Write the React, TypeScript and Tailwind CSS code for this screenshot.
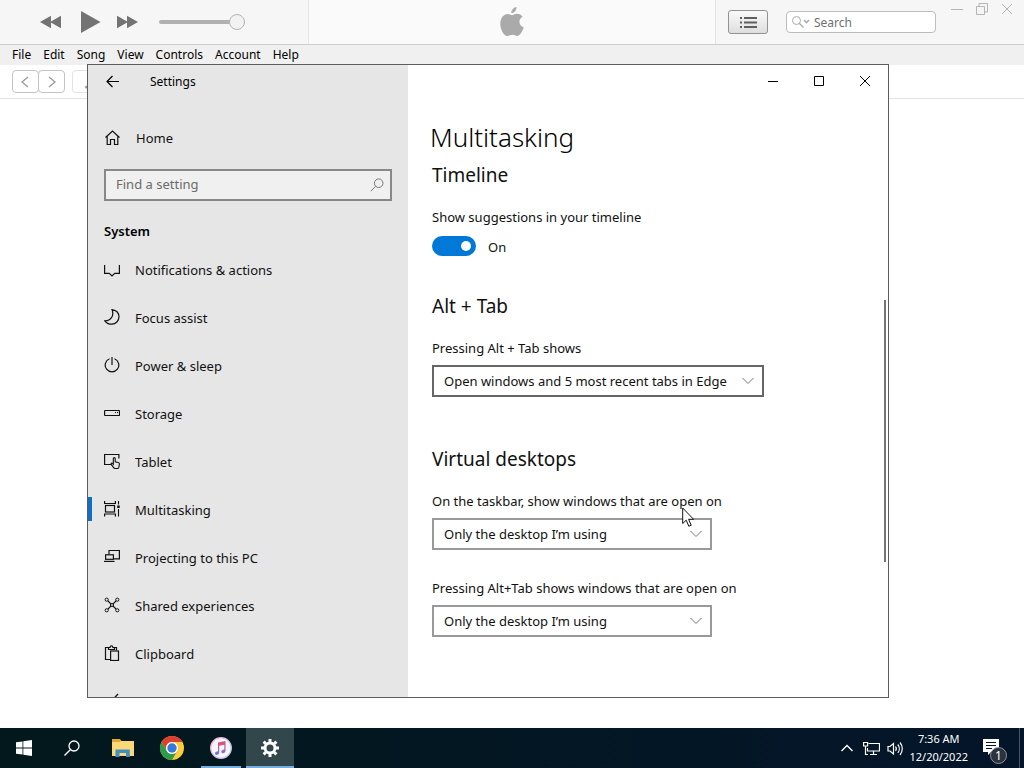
import type { ReactNode } from "react";

function Svg({ size = 16, className = "", children }: { size?: number; className?: string; children: ReactNode }) {
  return (
    <svg
      width={size}
      height={size}
      viewBox={`0 0 ${size} ${size}`}
      fill="none"
      stroke="currentColor"
      strokeWidth="1"
      className={`shrink-0 ${className}`}
      aria-hidden="true"
    >
      {children}
    </svg>
  );
}

const navItems: { label: string; icon: ReactNode; active?: boolean }[] = [
  { label: "Notifications & actions", icon: <path strokeWidth="1.2" d="M.6 4v8.4h4.6L8 15l2.8-2.6h4.6V4" /> },
  {
    label: "Focus assist",
    icon: <path strokeWidth="1.2" d="M8 .6c4.500.8 7 3.800 7 7.200 0 4-3.200 7.400-7.200 7.400-3 0-5.600-1.400-7-3.400C6.500 12 10.500 7 8 .6Z" />,
  },
  {
    label: "Power & sleep",
    icon: (
      <>
        <path strokeWidth="1.2" d="M5.500 1.800a6.800 6.800 0 1 0 5 0" />
        <path strokeWidth="1.2" d="M8 0v8" />
      </>
    ),
  },
  {
    label: "Storage",
    icon: (
      <>
        <rect x=".6" y="5.500" width="14.900" height="5" rx=".5" strokeWidth="1.200" />
        <path d="M11 7.500h1M13 7.500h1" />
      </>
    ),
  },
  {
    label: "Tablet",
    icon: (
      <>
        <path strokeWidth="1.200" d="M7 11.500H.6V1.500h14.300v4" />
        <path
          strokeWidth="1.100"
          d="M9.300 10V5.600c0-1.300 1.900-1.300 1.900 0v3.300l3 .6c.9.200 1.300.7 1.200 1.500l-.5 3.200c-.2.900-.7 1.300-1.500 1.300h-2.200c-.7 0-1.200-.3-1.600-.9L7.200 11.400c-.5-1 .6-1.700 1.300-.9l.8.9V9"
        />
      </>
    ),
  },
  {
    label: "Multitasking",
    active: true,
    icon: (
      <>
        <path strokeWidth="1.200" d="M.6 0v2.500h10.800V0M.6 15.500V13h10.800v2.500" />
        <rect x="1.500" y="4.500" width="9" height="6.500" strokeWidth="1.200" />
        <path d="M14.500 0v3.500M14.500 8v7.500" strokeWidth="1.100" />
        <rect x="13.200" y="4.500" width="2.500" height="2.500" fill="currentColor" stroke="none" />
      </>
    ),
  },
  {
    label: "Projecting to this PC",
    icon: (
      <>
        <path strokeWidth="1.200" d="M5 5.500v-4h10.400v8.400H10" />
        <rect x="1.600" y="5.800" width="7.800" height="4.500" strokeWidth="1.200" />
        <path strokeWidth="1.200" d="M0 12.400h10.500" />
      </>
    ),
  },
  {
    label: "Shared experiences",
    icon: (
      <>
        <circle cx="2.700" cy="2.700" r="1.600" />
        <circle cx="13.300" cy="2.700" r="1.600" />
        <circle cx="2.700" cy="13.300" r="1.600" />
        <circle cx="13.300" cy="13.300" r="1.600" />
        <circle cx="8" cy="8" r="1.500" strokeWidth="1.200" />
        <path strokeWidth="1.200" d="m4 4 2.900 2.900M12 4 9.100 6.900M4 12l2.900-2.900M12 12 9.100 9.100" />
      </>
    ),
  },
  {
    label: "Clipboard",
    icon: (
      <>
        <path strokeWidth="1.200" d="M6 14.500H1.500v-12h3M10 2.500h2.500v3" />
        <path strokeWidth="1.200" d="M4.500 4.500v-2h1.600C6 .2 8.900.2 8.900 2.500h1.600v2Z" />
        <rect x="6.600" y="6" width="7.900" height="9.500" strokeWidth="1.200" />
      </>
    ),
  },
];

function Chevron() {
  return (
    <svg
      width="12"
      height="8"
      viewBox="0 0 12 8"
      fill="none"
      stroke="#777"
      className="pointer-events-none absolute top-3 right-[10px]"
      aria-hidden="true"
    >
      <path d="m.5 1 5.500 5.500L11.500 1" />
    </svg>
  );
}

function Field({ id, label, value, wide }: { id: string; label: string; value: string; wide?: boolean }) {
  return (
    <div>
      <label htmlFor={id} className="block leading-5">
        {label}
      </label>
      <div className={`relative mt-[7px] max-w-full ${wide ? "w-[332px]" : "w-[280px]"}`}>
        <select
          id={id}
          className={`block h-8 w-full appearance-none border-2 bg-white pt-0.5 pl-[10px] outline-none ${wide ? "border-[#666]" : "border-[#999]"}`}
        >
          <option>{value}</option>
        </select>
        <Chevron />
      </div>
    </div>
  );
}

function PlayerWindow() {
  return (
    <main className="flex flex-1 flex-col bg-white">
      <header className="flex h-[45px] shrink-0 border-b border-[#cdcdcd] bg-[#f6f6f6] text-[#737373]">
        <div className="flex w-[309px] shrink-0 items-center border-r border-[#e6e6e6] pl-10">
          <button aria-label="Previous" className="mr-[19px]">
            <svg width="22" height="14" viewBox="0 0 22 14" fill="currentColor"><path d="M0 7 11 .8v12.400ZM10 7 21 .8v12.400Z" /></svg>
          </button>
          <button aria-label="Play" className="mr-4">
            <svg width="20" height="22" viewBox="0 0 20 22" fill="currentColor"><path d="M0 0v22l19.500-11Z" /></svg>
          </button>
          <button aria-label="Next" className="mr-5">
            <svg width="22" height="14" viewBox="0 0 22 14" fill="currentColor"><path d="M0 .8v12.400L11 7ZM10 .8v12.400L21 7Z" /></svg>
          </button>
          <input
            type="range"
            aria-label="Volume"
            defaultValue={100}
            className="h-4 w-[86px] appearance-none bg-transparent [&::-webkit-slider-runnable-track]:h-1 [&::-webkit-slider-runnable-track]:rounded-full [&::-webkit-slider-runnable-track]:bg-[#b0b0b0] [&::-webkit-slider-thumb]:-mt-1.5 [&::-webkit-slider-thumb]:size-4 [&::-webkit-slider-thumb]:appearance-none [&::-webkit-slider-thumb]:rounded-full [&::-webkit-slider-thumb]:border [&::-webkit-slider-thumb]:border-[#b4b4b4] [&::-webkit-slider-thumb]:bg-[#f2f2f2]"
          />
        </div>
        <div className="flex flex-1 items-center justify-center bg-[#fafafa] text-[#aaa]">
          <svg width="24" height="30" viewBox="0 0 24 30" fill="currentColor" role="img" aria-label="Apple">
            <path d="M16.500 0c.3 3-2.200 6.200-5.200 6.100C11 3.200 13.700.3 16.500 0ZM12 8.200c1.100 0 2.600-1.400 5-1.400 2.300 0 4.300 1.200 5.500 2.900-4.600 2.700-3.900 8.800 1.200 10.700-1 2.800-3.400 8.400-6.500 8.500-1.900 0-2.600-1.200-4.900-1.200s-3.100 1.200-4.900 1.200C3.700 29 .3 22.400.3 16.700.3 10.500 4.100 7 7.700 7c2 0 3.300 1.200 4.300 1.200Z" />
          </svg>
        </div>
        <div className="flex w-[309px] shrink-0 border-l border-[#e2e2e2] pl-3">
          <button
            aria-label="Up next"
            className="mt-[10px] flex h-6 w-10 items-center justify-center rounded-[3px] border border-[#929292] bg-linear-to-b from-[#fafafa] to-[#dedede]"
          >
            <svg width="17" height="11" viewBox="0 0 17 11" fill="#5f5f5f">
              <path d="M0 0h2v2H0zM4 0h13v2H4zM0 4.500h2v2H0zM4 4.500h13v2H4zM0 9h2v2H0zM4 9h13v2H4z" />
            </svg>
          </button>
          <div className="mt-[11px] ml-[18px] flex h-[22px] w-[150px] items-center rounded-[4px] border border-[#bcbcbc] bg-white pl-[5px]">
            <svg width="18" height="12" viewBox="0 0 18 12" fill="none" stroke="#aaa" className="shrink-0" aria-hidden="true">
              <circle cx="4.500" cy="4.500" r="4" />
              <path d="m7.500 7.500 4 4" strokeWidth="1.300" />
              <path d="m12 4 2.500 2.500L17 4" strokeWidth="1.600" />
            </svg>
            <input
              type="search"
              aria-label="Search"
              placeholder="Search"
              className="ml-1 w-full min-w-0 bg-transparent pt-0.5 text-xs outline-none placeholder:text-[#707070]"
            />
          </div>
          <div className="mt-[3px] ml-3 flex h-3 flex-1 items-center justify-between pr-[11px] pl-[3px] text-[#b5b5b5]">
            <button aria-label="Minimize player"><Svg size={12}><path d="M0 6.500h12" /></Svg></button>
            <button aria-label="Restore player"><Svg size={12}><path d="M.5 3.500h8v8h-8ZM3 3.500v-3h8.500v8.500H9" /></Svg></button>
            <button aria-label="Close player"><Svg size={12}><path d="m1 1 10 10M11 1 1 11" /></Svg></button>
          </div>
        </div>
      </header>
      <nav className="flex h-5 shrink-0 items-center gap-3 bg-[#f0f0f0] pl-3 text-xs text-black">
        {["File", "Edit", "Song", "View", "Controls", "Account", "Help"].map((m) => (
          <button key={m}>{m}</button>
        ))}
      </nav>
      <div className="flex h-[34px] shrink-0 items-center border-b border-[#e4e4e4] pl-3 text-[#9a9a9a]">
        <button aria-label="Back" className="flex h-[23px] w-[27px] items-center justify-center rounded-[4px] border border-[#c4c4c4]">
          <Svg size={12}><path strokeWidth="1.300" d="M8 1 2 6l6 5" /></Svg>
        </button>
        <button aria-label="Forward" className="-ml-px flex h-[23px] w-[27px] items-center justify-center rounded-[4px] border border-[#c4c4c4]">
          <Svg size={12}><path strokeWidth="1.300" d="m3 1 6 5-6 5" /></Svg>
        </button>
        <button aria-label="Music" className="ml-[7px] flex h-[23px] w-24 items-end rounded-[4px] border border-[#e2e2e2] pb-[3px] pl-[11px]">
          <Svg size={12}><path fill="currentColor" stroke="none" d="M4 9V2l7-1v7.500H9.500V3.200L5.500 4v5.500C5 12 1 12 1 10.200 1 9 2.500 8.400 4 9Z" /></Svg>
        </button>
      </div>
    </main>
  );
}

function SettingsWindow() {
  return (
    <section
      aria-label="Settings"
      className="absolute top-16 left-[87px] flex h-[634px] w-[802px] overflow-hidden border border-[#5c5c5c] bg-white text-[13px] text-[#111]"
    >
      <aside className="flex w-80 shrink-0 flex-col bg-[#e6e6e6]">
        <div className="flex h-8 shrink-0 items-center pt-px pl-[18px] text-xs text-black">
          <button aria-label="Back">
            <Svg size={13}><path strokeWidth="1.200" d="M6.500 1 1 6.500 6.500 12M1 6.500h12" /></Svg>
          </button>
          <span className="ml-[31px]">Settings</span>
        </div>
        <a href="#home" className="mt-5 flex h-10 shrink-0 items-center gap-4 pl-[17px]">
          <Svg size={15}><path strokeWidth="1.200" d="m.5 7.500 7-6.500 7 6.500M2.200 6.500v8h3.300v-5h4v5h3.300v-8" /></Svg>
          <span className="pt-1">Home</span>
        </a>
        <div className="mx-4 mt-3 flex h-8 shrink-0 items-center border-2 border-[#888] bg-[#f0f0f0] pr-[6px] pl-[10px]">
          <input
            type="text"
            aria-label="Find a setting"
            placeholder="Find a setting"
            className="min-w-0 flex-1 bg-transparent outline-none placeholder:text-[#6b6b6b]"
          />
          <Svg size={14} className="text-[#777]"><circle cx="8.700" cy="5.200" r="4.300" /><path d="M5.600 8.300.8 13.200" /></Svg>
        </div>
        <h2 className="mt-5 pl-4 leading-5 font-semibold text-black">System</h2>
        <nav className="mt-1 min-h-0 flex-1 overflow-hidden">
          {navItems.map((n) => (
            <a
              key={n.label}
              href="#section"
              aria-current={n.active ? "page" : undefined}
              className="flex h-12 items-center"
            >
              <span className={`h-6 w-1 ${n.active ? "bg-[#0f6fc4]" : ""}`} />
              <Svg className="mr-[15px] ml-3">{n.icon}</Svg>
              <span className="pt-1">{n.label}</span>
            </a>
          ))}
          <a href="#remote" aria-label="Remote Desktop" className="flex h-12 items-center pl-4">
            <Svg><path strokeWidth="1.300" d="M14 1 8 7.500 14 14" /></Svg>
          </a>
        </nav>
      </aside>
      <div className="relative flex min-w-0 flex-1 flex-col">
        <div className="flex h-8 shrink-0 justify-end text-black">
          <button aria-label="Minimize" className="flex w-[46px] items-center justify-center"><Svg size={10}><path d="M0 5.500h10" /></Svg></button>
          <button aria-label="Maximize" className="flex w-[46px] items-center justify-center"><Svg size={10}><path d="M.5.5h9v9h-9z" /></Svg></button>
          <button aria-label="Close" className="flex w-[46px] items-center justify-center"><Svg size={10}><path d="m0 0 10 10M10 0 0 10" /></Svg></button>
        </div>
        <div className="px-6">
          <h1 className="mt-[22px] -ml-0.5 text-[26px] leading-9 font-light text-black">Multitasking</h1>
          <h2 className="mt-1.5 text-[19px] leading-7">Timeline</h2>
          <label htmlFor="suggestions" className="mt-[18px] block leading-5">Show suggestions in your timeline</label>
          <div className="mt-[9px] flex h-5 items-center gap-3">
            <input
              id="suggestions"
              type="checkbox"
              role="switch"
              defaultChecked
              className="flex h-5 w-11 appearance-none items-center rounded-full bg-[#0078d7] px-[5px] before:size-[10px] before:rounded-full before:bg-white checked:justify-end"
            />
            <span className="pt-1">On</span>
          </div>
          <h2 className="mt-9 mb-[18px] text-[19px] leading-7">Alt + Tab</h2>
          <Field id="alttab" label="Pressing Alt + Tab shows" value="Open windows and 5 most recent tabs in Edge" wide />
          <h2 className="mt-12 mb-[18px] text-[19px] leading-7">Virtual desktops</h2>
          <div className="flex flex-col gap-7">
            <Field id="taskbar" label="On the taskbar, show windows that are open on" value="Only the desktop I’m using" />
            <Field id="switcher" label="Pressing Alt+Tab shows windows that are open on" value="Only the desktop I’m using" />
          </div>
        </div>
        <div className="absolute top-[235px] right-[2px] h-[262px] w-[2px] bg-[#757575]" />
      </div>
    </section>
  );
}

function Taskbar() {
  const task = "flex h-10 w-12 items-center justify-center";
  return (
    <footer className="flex h-10 shrink-0 bg-linear-to-r from-[#03181c] to-[#04152a] text-xs text-white">
      <button aria-label="Start" className={task}>
        <svg width="16" height="16" viewBox="0 0 16 16" fill="white"><path d="M0 2.300 6.500 1.400v6.200H0ZM7.300 1.300 16 0v7.600H7.300ZM0 8.400h6.500v6.200L0 13.700ZM7.300 8.400H16V16l-8.700-1.300Z" /></svg>
      </button>
      <button aria-label="Search Windows" className={task}>
        <Svg><circle cx="10" cy="6" r="5" strokeWidth="1.300" /><path strokeWidth="1.400" d="M6.300 9.700.5 15.500" /></Svg>
      </button>
      <div className="ml-[3px] flex gap-px">
        <button aria-label="File Explorer" className={task}>
          <svg width="22" height="18" viewBox="0 0 22 18">
            <path fill="#e5a82e" d="M0 0h8l1.500 2H22v4H0Z" />
            <path fill="#fcd978" d="M0 3h7.500L9 2h13v15H0Z" />
            <path fill="#3f8fc4" d="M3.500 18v-7.500h14.300V18h-3.700v-4H7.500v4Z" />
          </svg>
        </button>
        <button aria-label="Google Chrome" className={task}>
          <svg width="24" height="24" viewBox="0 0 24 24">
            <circle cx="12" cy="12" r="12" fill="#fccc3a" />
            <path fill="#df3f31" d="M1.600 6A12 12 0 0 1 22.400 6H12a6 6 0 0 0-5.200 9Z" />
            <path fill="#2b9c4b" d="M1.600 6A12 12 0 0 0 12 24l5.200-9A6 6 0 0 1 6.800 15Z" />
            <circle cx="12" cy="12" r="6" fill="white" />
            <circle cx="12" cy="12" r="4.700" fill="#3778dc" />
          </svg>
        </button>
        <button aria-label="iTunes" className={`${task} relative`}>
          <svg width="22" height="22" viewBox="0 0 22 22">
            <defs>
              <linearGradient id="note" x1="0" y1="0" x2="0" y2="1"><stop stopColor="#ef4b6c" /><stop offset="1" stopColor="#5c7fdc" /></linearGradient>
              <linearGradient id="ring" x1="0" y1="0" x2="1" y2="1"><stop stopColor="#f7b9d0" /><stop offset="1" stopColor="#b8c9f4" /></linearGradient>
            </defs>
            <circle cx="11" cy="11" r="10.300" fill="#f7f4fa" stroke="url(#ring)" strokeWidth="1.300" />
            <path fill="url(#note)" d="M8 5.600 15.500 4v9.800c0 2.800-4.200 3.200-4.200.9 0-1.500 1.300-1.900 3-2.200V7.700L9.200 8.800v6.800c0 2.800-4.200 3.200-4.200.9 0-1.500 1.300-1.900 3-2.200Z" />
          </svg>
          <span className="absolute inset-x-1 bottom-0 h-[2px] bg-[#76aee0]" />
        </button>
        <button aria-label="Settings app" className={`${task} relative bg-[#32474c]`}>
          <svg width="18" height="18" viewBox="0 0 18 18" fill="none" stroke="white">
            <circle cx="9" cy="9" r="5" strokeWidth="3" />
            <path strokeWidth="3" d="M9 0v3M9 15v3M0 9h3M15 9h3M2.600 2.600l2.200 2.200M13.200 13.200l2.200 2.200M2.600 15.400l2.200-2.200M13.200 4.800l2.200-2.200" />
          </svg>
          <span className="absolute inset-x-0 bottom-0 h-[2px] bg-[#76aee0]" />
        </button>
      </div>
      <div className="ml-auto flex items-center">
        <button aria-label="Show hidden icons" className="mr-[10px]"><Svg size={12}><path strokeWidth="1.400" d="m.5 9 5.500-5.500L11.500 9" /></Svg></button>
        <button aria-label="Network" className="mr-[7px]">
          <Svg size={17}>
            <path strokeWidth="1.200" d="M5.500 3.500h11v7.500h-12V8M10.500 11v3.500M7 14.500h7" />
            <path strokeWidth="1.200" d="M.6 2.500h4v3.500h-4zM2.500 6v8.500H5" />
          </Svg>
        </button>
        <button aria-label="Volume level" className="mr-[5px]">
          <Svg size={17}>
            <path strokeWidth="1.200" d="M1 6.500h2l3.500-3v10.500L3 11H1Z" />
            <path strokeWidth="1.200" d="M8.500 6.500c1 1.300 1 3 0 4.300M10.800 4.500c2 2.400 2 6 0 8.400M13 2.500c3 3.500 3 9 0 12.500" />
          </Svg>
        </button>
        <time className="mr-[15px] text-center text-[11px] leading-[18px]">7:36 AM<br />12/20/2022</time>
        <button aria-label="1 new notification" className="relative mr-3">
          <svg width="24" height="24" viewBox="0 0 24 24" aria-hidden="true">
            <path fill="white" d="M0 3h16v13H8l-3 3v-3H0Z" />
            <path stroke="#04152a" strokeWidth="1.200" d="M3 6.500h10M3 9.500h10M3 12.500h6" />
          </svg>
          <span className="absolute right-0 bottom-[-4px] flex size-[17px] items-center justify-center rounded-full border border-[#8d949c] bg-[#2b333c] text-xs leading-none">1</span>
        </button>
        <span className="h-full w-[5px] border-l border-[#4a5665]" />
      </div>
    </footer>
  );
}

export default function App() {
  return (
    <div className="relative flex min-h-screen flex-col overflow-hidden font-['Noto_Sans','Open_Sans',sans-serif]">
      <PlayerWindow />
      <SettingsWindow />
      <Taskbar />
      <svg width="14" height="21" viewBox="0 0 14 21" className="absolute top-[507px] left-[682px]" aria-hidden="true">
        <path fill="white" stroke="#111" d="M.7 1v15.500l3.500-3.300 2.600 6 2.400-1-2.600-5.900h5Z" />
      </svg>
    </div>
  );
}
